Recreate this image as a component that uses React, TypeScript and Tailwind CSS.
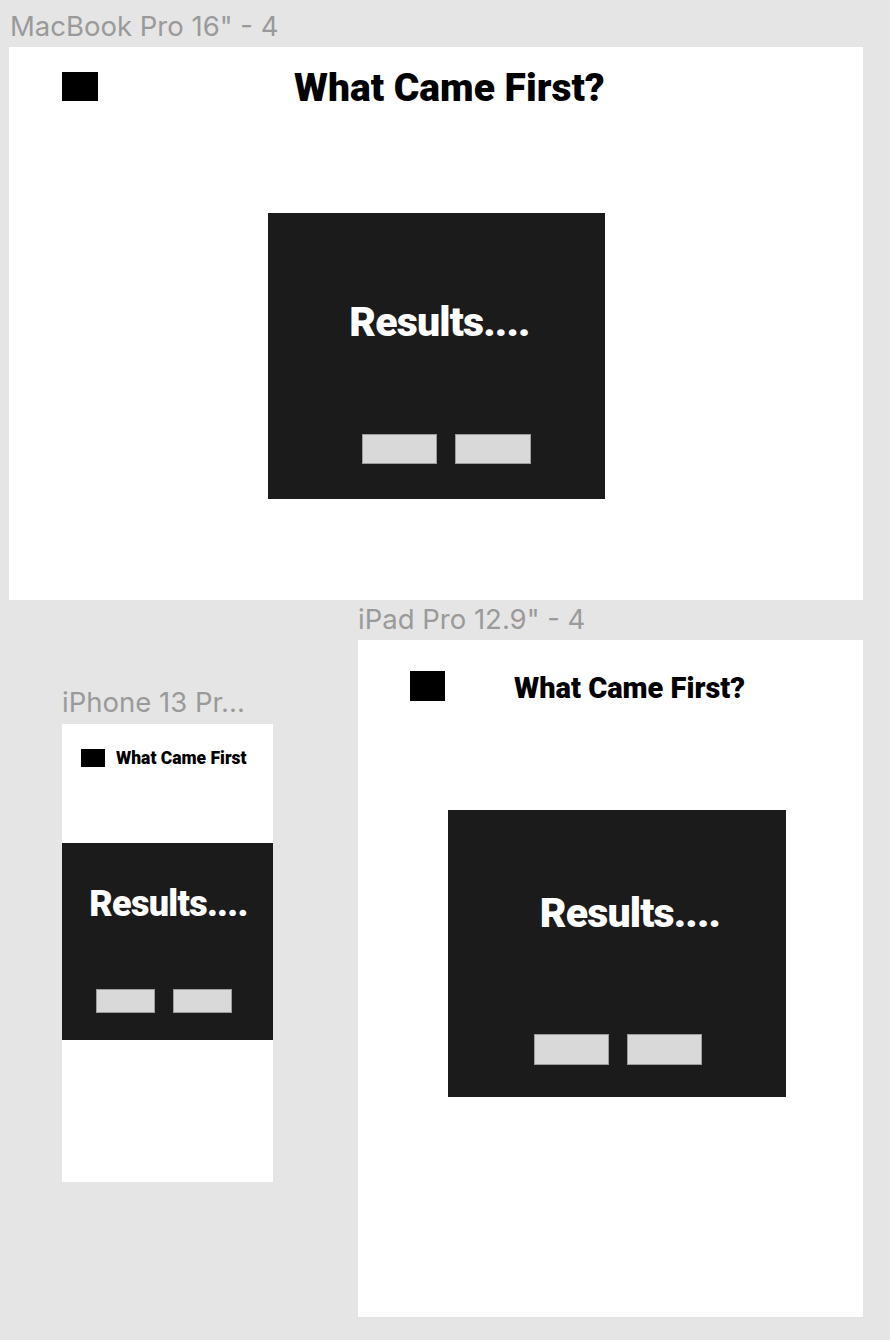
const label = "absolute leading-none text-[27.5px] text-[#9a9a9a] font-['Inter',sans-serif] whitespace-nowrap";
const btn = "bg-[#d9d9d9] border border-[#9c9c9c]";

export default function App() {
	return (
		<div className="relative w-[890px] h-[1340px] bg-[#e5e5e5] overflow-hidden font-['Roboto',sans-serif]">
			{/* MacBook frame */}
			<div className={`${label} left-[10px] top-[13px]`}>MacBook Pro 16" - 4</div>
			<div className="absolute left-[9px] top-[47px] w-[854px] h-[553px] bg-white">
				<div className="flex items-start pl-[53px] pt-[22px]">
					<div className="w-[36px] h-[29px] mt-[3px] bg-black" />
					<h1 className="ml-[196px] text-[39px] leading-none font-black text-black">
						What Came First?
					</h1>
				</div>
				<div className="ml-[259px] mt-[105px] w-[337px] h-[286px] bg-[#1b1b1b] flex flex-col">
					<div className="pt-[89px] pl-[6px] text-center text-white font-black text-[41px] leading-none tracking-[-0.02em]">
						Results....
					</div>
					<div className="flex gap-[18px] pl-[94px] mt-[91px]">
						<div className={`w-[75px] h-[30px] ${btn}`} />
						<div className={`w-[76px] h-[30px] ${btn}`} />
					</div>
				</div>
			</div>

			{/* iPad frame */}
			<div className={`${label} left-[358px] top-[606px]`}>iPad Pro 12.9" - 4</div>
			<div className="absolute left-[358px] top-[640px] w-[505px] h-[677px] bg-white">
				<div className="flex items-start pl-[52px] pt-[31px]">
					<div className="w-[35px] h-[30px] bg-black" />
					<h2 className="ml-[69px] mt-[3px] text-[29px] leading-none font-black text-black">
						What Came First?
					</h2>
				</div>
				<div className="ml-[90px] mt-[107px] w-[338px] h-[287px] bg-[#1b1b1b] flex flex-col">
					<div className="pt-[83px] pl-[26px] text-center text-white font-black text-[41px] leading-none tracking-[-0.02em]">
						Results....
					</div>
					<div className="flex gap-[18px] pl-[86px] mt-[100px]">
						<div className={`w-[75px] h-[31px] ${btn}`} />
						<div className={`w-[75px] h-[31px] ${btn}`} />
					</div>
				</div>
			</div>

			{/* iPhone frame */}
			<div className={`${label} left-[62px] top-[689px]`}>iPhone 13 Pr...</div>
			<div className="absolute left-[62px] top-[724px] w-[211px] h-[458px] bg-white">
				<div className="flex items-start pl-[19px] pt-[25px]">
					<div className="w-[24px] h-[18px] bg-black" />
					<h3 className="ml-[11px] mt-[1px] text-[17.5px] leading-none font-black text-black">
						What Came First
					</h3>
				</div>
				<div className="mt-[75px] w-[211px] h-[197px] bg-[#1b1b1b] flex flex-col">
					<div className="pt-[43px] pl-[2px] text-center text-white font-black text-[36px] leading-none tracking-[-0.02em]">
						Results....
					</div>
					<div className="flex gap-[18px] pl-[34px] mt-[67px]">
						<div className={`w-[59px] h-[24px] ${btn}`} />
						<div className={`w-[59px] h-[24px] ${btn}`} />
					</div>
				</div>
			</div>
		</div>
	);
}
